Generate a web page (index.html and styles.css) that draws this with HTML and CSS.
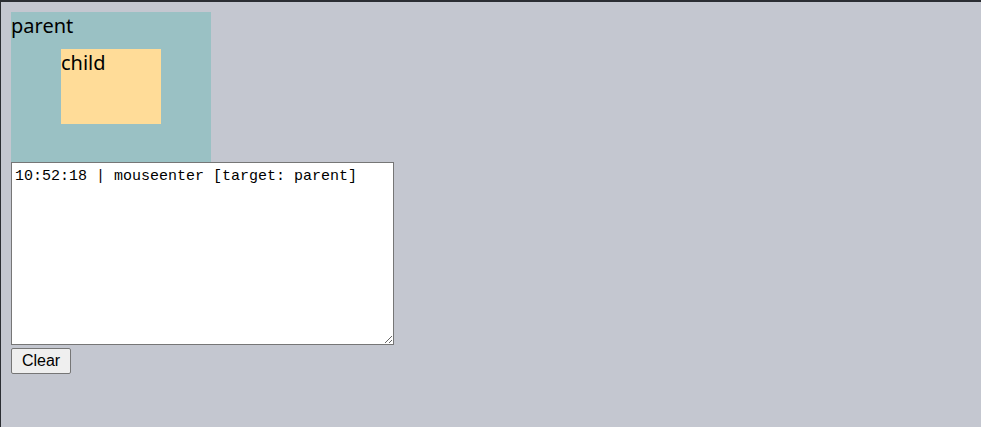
FILE: index.html
```html
<!DOCTYPE html>
<html>
<head>
<meta charset="utf-8">
<link rel="stylesheet" href="styles.css">
</head>
<body>
<div class="page">
  <div class="parent">parent
    <div class="child">child</div>
  </div>
  <textarea class="log">10:52:18 | mouseenter [target: parent]</textarea>
  <button class="clear">Clear</button>
</div>
</body>
</html>
```
FILE: styles.css
```css
html, body {
  margin: 0;
  height: 100%;
}
body {
  background: #c4c7d0;
  border-top: 2px solid #2b2e33;
  border-left: 1px solid #2b2e33;
  box-sizing: border-box;
}
.page {
  padding: 10px 0 0 10px;
  font-family: "Noto Sans", "Liberation Sans", sans-serif;
}
.parent {
  width: 200px;
  height: 150px;
  background: #9ac1c4;
  font-size: 20px;
  line-height: 27px;
  color: #000;
  box-sizing: border-box;
}
.child {
  width: 100px;
  height: 75px;
  margin: 10px 50px 0;
  background: #ffdc98;
  line-height: 27px;
}
.log {
  display: block;
  width: 383px;
  height: 183px;
  box-sizing: border-box;
  margin: 0;
  padding: 4px 3px 2px;
  border: 1px solid #767676;
  background: #fff;
  font-family: "Liberation Mono", monospace;
  font-size: 15px;
  line-height: 19px;
  color: #000;
}
.clear {
  display: block;
  margin-top: 3px;
  width: 60px;
  height: 26px;
  padding: 0;
  font-family: "Liberation Sans", Arial, sans-serif;
  font-size: 16px;
  color: #000;
  background: #efefef;
  border: 1px solid #767676;
  border-radius: 2px;
}
```
